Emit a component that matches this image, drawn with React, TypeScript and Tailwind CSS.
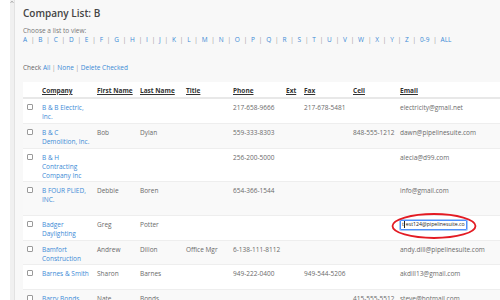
import React from 'react';

const letters = ['A', 'B', 'C', 'D', 'E', 'F', 'G', 'H', 'I', 'J', 'K', 'L', 'M', 'N', 'O', 'P', 'Q', 'R', 'S', 'T', 'U', 'V', 'W', 'X', 'Y', 'Z', '0-9', 'ALL'];

type Row = {
  company: string;
  first?: string;
  last?: string;
  title?: string;
  phone?: string;
  ext?: string;
  fax?: string;
  cell?: string;
  email?: string;
  h: string;
};

const rows: Row[] = [
  { company: 'B & B Electric, Inc.', phone: '217-658-9666', fax: '217-678-5481', email: 'electricity@gmail.net', h: 'h-[25px]' },
  { company: 'B & C Demolition, Inc.', first: 'Bob', last: 'Dylan', phone: '559-333-8303', cell: '848-555-1212', email: 'dawn@pipelinesuite.com', h: 'h-[25px]' },
  { company: 'B & H Contracting Company Inc', phone: '256-200-5000', email: 'alecia@d99.com', h: 'h-[33px]' },
  { company: 'B FOUR PLIED, INC.', first: 'Debbie', last: 'Boren', phone: '654-366-1544', email: 'info@gmail.com', h: 'h-[34px]' },
  { company: 'Badger Daylighting', first: 'Greg', last: 'Potter', h: 'h-[25px]' },
  { company: 'Bamfort Construction', first: 'Andrew', last: 'Dillon', title: 'Office Mgr', phone: '6-138-111-8112', email: 'andy.dill@pipelinesuite.com', h: 'h-[24px]' },
  { company: 'Barnes & Smith', first: 'Sharon', last: 'Barnes', phone: '949-222-0400', fax: '949-544-5206', email: 'akdill13@gmail.com', h: 'h-[25px]' },
  { company: 'Barry Bonds', first: 'Nate', last: 'Bonds', cell: '415-555-5512', email: 'steve@hotmail.com', h: 'h-[25px]' },
];

const headers = ['Company', 'First Name', 'Last Name', 'Title', 'Phone', 'Ext', 'Fax', 'Cell', 'Email'];

export default function App() {
  return (
    <div
      className="flex h-[300px] w-[500px] overflow-hidden bg-[#f8f8f8] text-[#6a6a6a]"
      style={{ fontFamily: '"Open Sans", "Liberation Sans", sans-serif' }}
    >
      <div className="w-[10px] shrink-0 bg-white" />
      <div className="flex w-[5px] shrink-0 justify-center border-r border-[#e2e2e2] bg-[#f0f0f0]">
        <svg width="4" height="4" viewBox="0 0 4 4">
          <path d="M0.5 3 L2 1 L3.5 3" fill="none" stroke="#999" strokeWidth="0.7" />
        </svg>
      </div>

      <main className="flex min-w-0 flex-1 flex-col pl-[8px]">
        <h1 className="mt-[6px] text-[10px] font-semibold leading-[14px] text-[#444]">Company List: B</h1>
        <p className="mt-[6px] text-[6.5px] leading-[9px] text-[#777]">Choose a list to view:</p>
        <div className="flex items-center text-[6.5px] leading-[9px]">
          {letters.map((l, i) => (
            <span key={l} className="flex items-center">
              <a className="text-[#3b8ad6]">{l}</a>
              {i < letters.length - 1 && <span className="mx-[3.8px] text-[#999]">|</span>}
            </span>
          ))}
        </div>

        <p className="mt-[19px] text-[6.5px] leading-[9px] text-[#666]">
          Check <a className="text-[#3b8ad6]">All</a> <span className="text-[#999]">|</span>{' '}
          <a className="text-[#3b8ad6]">None</a> <span className="text-[#999]">|</span>{' '}
          <a className="text-[#3b8ad6]">Delete Checked</a>
        </p>

        <div className="mt-[10px] flex-1 bg-white">
          <table className="w-[520px] table-fixed border-collapse text-left text-[6.5px] leading-[9px]">
            <colgroup>
              <col className="w-[19px]" />
              <col className="w-[55px]" />
              <col className="w-[43px]" />
              <col className="w-[46px]" />
              <col className="w-[47px]" />
              <col className="w-[53px]" />
              <col className="w-[18px]" />
              <col className="w-[49px]" />
              <col className="w-[47px]" />
              <col className="w-[143px]" />
            </colgroup>
            <thead>
              <tr className="h-[15px] border-b-2 border-[#e8e8e8]">
                <th />
                {headers.map((h) => (
                  <th key={h} className="pt-[4px] pb-[2px] align-top font-bold text-[#333] underline">
                    {h}
                  </th>
                ))}
              </tr>
            </thead>
            <tbody>
              {rows.map((r, i) => (
                <tr key={r.company} className={`${r.h} border-b border-[#eeeeee] ${i % 2 === 1 ? 'bg-[#f9f9f9]' : 'bg-white'}`}>
                  <td className="pt-[5px] pl-[4px] align-top">
                    <span className="block h-[6px] w-[6px] rounded-[1px] border border-[#9a9a9a] bg-white" />
                  </td>
                  <td className="pt-[4px] pr-[5px] align-top">
                    <a className="text-[#3b8ad6]">{r.company}</a>
                  </td>
                  <td className="pt-[4px] align-top">{r.first}</td>
                  <td className="pt-[4px] align-top">{r.last}</td>
                  <td className="pt-[4px] align-top">{r.title}</td>
                  <td className="pt-[4px] align-top">{r.phone}</td>
                  <td className="pt-[4px] align-top">{r.ext}</td>
                  <td className="pt-[4px] align-top">{r.fax}</td>
                  <td className="pt-[4px] align-top">{r.cell}</td>
                  <td className="pt-[4px] align-top">
                    {r.email ? (
                      r.email
                    ) : (
                      <div className="relative">
                        <div className="flex h-[10px] w-[67px] items-center overflow-hidden rounded-[1px] border border-[#4d90fe] bg-white px-[1px] text-[5.2px] text-[#222] shadow-[0_0_0_1px_#a9c8f5]">
                          <span>t</span>
                          <span className="mx-[0.5px] inline-block h-[7px] w-[1px] bg-[#222]" />
                          <span className="whitespace-nowrap">est124@pipelinesuite.co</span>
                        </div>
                        <svg className="absolute left-[-9px] top-[-7px]" width="88" height="28" viewBox="0 0 88 28">
                          <ellipse cx="43" cy="13" rx="41.5" ry="12" fill="none" stroke="#e31b23" strokeWidth="1.8" />
                        </svg>
                      </div>
                    )}
                  </td>
                </tr>
              ))}
            </tbody>
          </table>
        </div>
      </main>
    </div>
  );
}
